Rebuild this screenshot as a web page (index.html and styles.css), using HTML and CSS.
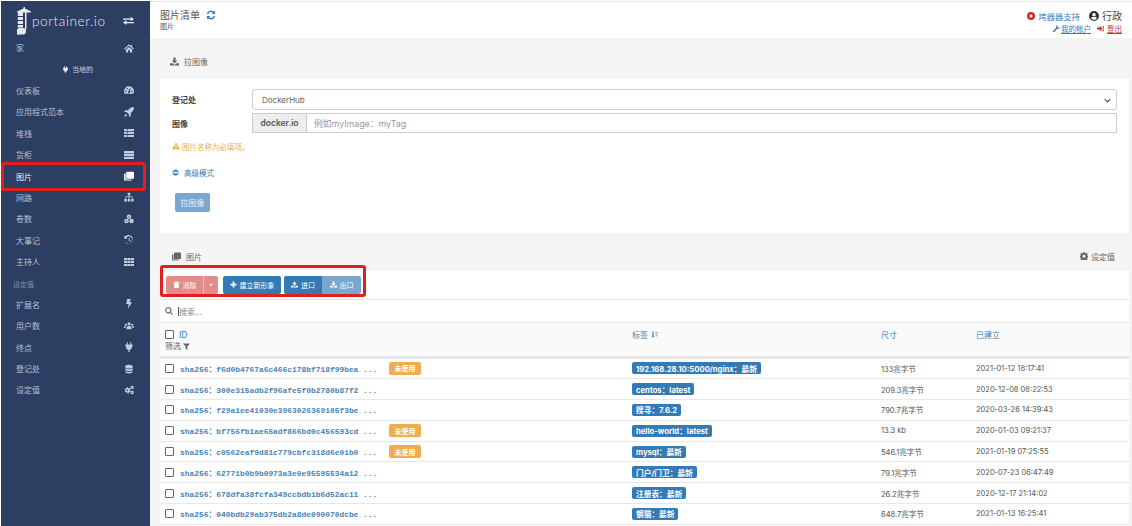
FILE: index.html
```html
<!DOCTYPE html>
<html lang="zh">
<head>
<meta charset="utf-8">
<title>图片清单</title>
<link rel="stylesheet" href="styles.css">
</head>
<body>
<svg class="defs" aria-hidden="true">
  <symbol id="i-home" viewBox="0 0 16 16"><path d="M8 2 0 9l1 1.2L8 4.3l7 5.9L16 9l-3-2.6V3h-2v1.700zM3 10.500V15h3.500v-3.500h3V15H13v-4.500L8 6.200z"/></symbol>
  <symbol id="i-gauge" viewBox="0 0 16 16"><path d="M8 2a8 8 0 0 0-8 8c0 1.600.4 3 1.200 4h13.600c.8-1 1.200-2.400 1.200-4a8 8 0 0 0-8-8zM3 11a1.200 1.200 0 1 1 0-2.400A1.200 1.200 0 0 1 3 11zm2-4a1.200 1.200 0 1 1 0-2.400A1.200 1.200 0 0 1 5 7zm4.500 5.500a1.700 1.700 0 0 1-3-1.300l3-6.200 1 .3-1 5.800c.3.400.2.900 0 1.400zM13 11a1.200 1.200 0 1 1 0-2.400 1.200 1.200 0 0 1 0 2.400z"/></symbol>
  <symbol id="i-rocket" viewBox="0 0 16 16"><path d="M16 0c-4 0-7 1.500-9.500 5H2L0 8h4l4 4v4l3-2v-4.500C14.500 7 16 4 16 0zM3 11c-1.500.5-2 2.500-2.500 4.500C2.500 15 4.500 14.500 5 13z"/></symbol>
  <symbol id="i-list" viewBox="0 0 16 16"><path d="M0 1.500h4.500V5H0zm5.500 0H16V5H5.500zM0 6.200h4.500v3.500H0zm5.500 0H16v3.500H5.500zM0 11h4.500v3.500H0zm5.500 0H16v3.500H5.500z"/></symbol>
  <symbol id="i-server" viewBox="0 0 16 16"><path d="M0 1.500h16v4H0zm0 5h16v3.500H0zM0 11h16v3.500H0z"/></symbol>
  <symbol id="i-clone" viewBox="0 0 16 16"><path d="M5 1h9.500A1.500 1.500 0 0 1 16 2.500V11a1.500 1.500 0 0 1-1.500 1.500H5A1.500 1.500 0 0 1 3.500 11V2.500A1.500 1.500 0 0 1 5 1z"/><path d="M2.500 4v8.500a1 1 0 0 0 1 1H12V15H1.500A1.500 1.500 0 0 1 0 13.500V5.500A1.500 1.500 0 0 1 1.500 4z"/></symbol>
  <symbol id="i-net" viewBox="0 0 16 16"><path d="M6 1h4v4H8.700v2.300H14V11h1.500v4h-4v-4H13V8.500H8.700V11H10v4H6v-4h1.300V8.500H3V11h1.500v4h-4v-4H2V7.300h5.300V5H6z"/></symbol>
  <symbol id="i-cubes" viewBox="0 0 16 16"><circle cx="8" cy="4.500" r="3.600"/><circle cx="4" cy="11" r="3.600"/><circle cx="12" cy="11" r="3.600"/><circle cx="8" cy="4.500" r="1.100" fill="#2d3e63"/><circle cx="4" cy="11" r="1.100" fill="#2d3e63"/></symbol>
  <symbol id="i-history" viewBox="0 0 16 16"><path d="M2 2 .5 1v5h5L3.800 4.300A5.500 5.500 0 1 1 3.500 11.500l-1.300 1A7.200 7.200 0 1 0 2 2z"/><path d="M7.500 4.500H9V8l2.500 1.800-.8 1.100L7.500 8.800z"/></symbol>
  <symbol id="i-grid" viewBox="0 0 16 16"><path d="M0 1.500h5V5H0zm5.500 0h5V5h-5zm5.500 0h5V5h-5zM0 6.200h5v3.500H0zm5.500 0h5v3.500h-5zm5.500 0h5v3.500h-5zM0 11h5v3.500H0zm5.500 0h5v3.500h-5zm5.500 0h5v3.500h-5z"/></symbol>
  <symbol id="i-bolt" viewBox="0 0 16 16"><path d="M5 0h6L9 5h4L6 16l1.500-8H3.500z"/></symbol>
  <symbol id="i-users" viewBox="0 0 16 16"><circle cx="8" cy="4.500" r="2.500"/><circle cx="3" cy="6" r="1.800"/><circle cx="13" cy="6" r="1.800"/><path d="M4 13v-2.500A3 3 0 0 1 7 8h2a3 3 0 0 1 3 2.500V13zM0 11V9.500A2 2 0 0 1 2 8h1a4 4 0 0 0-.5 3zm16 0V9.500A2 2 0 0 0 14 8h-1a4 4 0 0 1 .5 3z"/></symbol>
  <symbol id="i-plug" viewBox="0 0 16 16"><path d="M4.500 0H6v4h4V0h1.500v4H14v2h-1v2.500a5 5 0 0 1-4 4.400V16H7v-3.100a5 5 0 0 1-4-4.400V6H2V4h2.500z"/></symbol>
  <symbol id="i-db" viewBox="0 0 16 16"><path d="M2 3.500C2 2 5 1 8 1s6 1 6 2.500V5c0 1.300-3 2.200-6 2.200S2 6.300 2 5zm0 3.300C3.500 8 6 8.400 8 8.400s4.500-.4 6-1.600v2.400c0 1.300-3 2.200-6 2.200s-6-.9-6-2.200zm0 4.200c1.500 1.200 4 1.600 6 1.600s4.500-.4 6-1.600v1.500C14 14 11 15 8 15s-6-1-6-2.500z"/></symbol>
  <symbol id="i-cogs" viewBox="0 0 16 16"><path d="M4.500 3.500h2l.4 1.500 1.300.6 1.300-.7 1 1.500-1 1 .1 1.400 1.200.7-.7 1.700-1.400-.3-1 1-.2 1.500h-2L5 11.900l-1.300-.6-1.300.7-1.200-1.500 1-1.100-.1-1.300-1.100-.8.7-1.700 1.400.4 1-1z"/><circle cx="5.500" cy="8.500" r="1.300" fill="#2d3e63"/><circle cx="13" cy="4" r="2.800"/><circle cx="13" cy="12" r="2.800"/><circle cx="13" cy="4" r=".9" fill="#2d3e63"/><circle cx="13" cy="12" r=".9" fill="#2d3e63"/></symbol>
  <symbol id="i-exchange" viewBox="0 0 16 16"><path d="M0 5h11V2.500L16 6l-5 3.200V7H0zM16 10H5V7.800L0 11l5 3.500V12h11z"/></symbol>
  <symbol id="i-refresh" viewBox="0 0 16 16"><path d="M14.500 1v5.500H9l2.200-2.200A4.700 4.700 0 0 0 3.600 6.500H1.300A7 7 0 0 1 12.800 2.700zM1.500 15V9.500H7l-2.200 2.200a4.700 4.700 0 0 0 7.600-2.200h2.300A7 7 0 0 1 3.200 13.300z"/></symbol>
  <symbol id="i-download" viewBox="0 0 16 16"><path d="M6 1h4v5.500h3L8 11.500 3 6.500h3zM0 11h4.500L8 14l3.500-3H16v4H0z"/></symbol>
  <symbol id="i-upload" viewBox="0 0 16 16"><path d="M8 1l5 5h-3v5H6V6H3zM0 11h4.500v1.500h7V11H16v4H0z"/></symbol>
  <symbol id="i-warn" viewBox="0 0 16 16"><path d="M8 1 .2 15h15.600zM7 6h2v5H7zm0 6h2v2H7z" fill-rule="evenodd"/></symbol>
  <symbol id="i-globe" viewBox="0 0 16 16"><path d="M8 1a7 7 0 1 0 0 14A7 7 0 0 0 8 1zM1.800 7h12.400v1.300H1.800zm1 3.500h10.400v1.200H2.800zm0-6.500h10.400v1.200H2.800z" fill-rule="evenodd"/></symbol>
  <symbol id="i-trash" viewBox="0 0 16 16"><path d="M5.500 1h5l.8 1.500H15V4H1V2.500h3.700zM2.500 5h11v9.500A1.500 1.500 0 0 1 12 16H4a1.500 1.500 0 0 1-1.500-1.500z"/></symbol>
  <symbol id="i-plus" viewBox="0 0 16 16"><path d="M6 1h4v5h5v4h-5v5H6v-5H1V6h5z"/></symbol>
  <symbol id="i-search" viewBox="0 0 16 16"><path d="M6.500 0a6.500 6.500 0 0 1 5.200 10.400L16 14.700 14.300 16.400l-4.200-4.300A6.500 6.500 0 1 1 6.500 0zm0 2.300a4.200 4.200 0 1 0 0 8.400 4.200 4.200 0 0 0 0-8.400z"/></symbol>
  <symbol id="i-filter" viewBox="0 0 16 16"><path d="M0 1h16L10 8v8l-4-3V8z"/></symbol>
  <symbol id="i-sort" viewBox="0 0 16 16"><path d="M3 1h3v10h2.500l-4 4.500-4-4.500H3zM10 2h5v2h-5zm0 4h5v2h-5zm1 4h4v2h-4z"/></symbol>
  <symbol id="i-cog" viewBox="0 0 16 16"><path d="M6.500 0h3l.4 2.200 1.500.7L13.300 1.600l2.100 2.100-1.300 1.900.7 1.500 2.200.4v3l-2.200.4-.7 1.500 1.300 1.900-2.100 2.100-1.900-1.300-1.500.7-.4 2.200h-3l-.4-2.200-1.500-.7-1.900 1.300L.6 14.300l1.300-1.900-.7-1.500L-1 10.500v-3l2.200-.4.700-1.500L.6 3.700l2.100-2.100 1.900 1.300 1.500-.7zM8 5.500a3 3 0 1 0 0 6 3 3 0 0 0 0-6z" fill-rule="evenodd"/></symbol>
  <symbol id="i-life" viewBox="0 0 16 16"><path d="M8 0a8 8 0 1 0 0 16A8 8 0 0 0 8 0zm0 5a3 3 0 1 1 0 6 3 3 0 0 1 0-6z" fill-rule="evenodd"/></symbol>
  <symbol id="i-user" viewBox="0 0 16 16"><path d="M8 0a8 8 0 1 0 0 16A8 8 0 0 0 8 0zm0 3a2.800 2.800 0 1 1 0 5.600A2.800 2.800 0 0 1 8 3zm0 11a6 6 0 0 1-4.500-2c.3-1.500 1.500-2.400 2.500-2.400h4c1 0 2.200.9 2.500 2.400A6 6 0 0 1 8 14z" fill-rule="evenodd"/></symbol>
  <symbol id="i-wrench" viewBox="0 0 16 16"><path d="M15.800 4a4.500 4.500 0 0 1-6 4.800L3.500 15.500a1.700 1.700 0 0 1-2.800-2.500L7.200 6.200A4.500 4.500 0 0 1 12 .2L9.500 2.800l.5 3 3 .6z"/></symbol>
  <symbol id="i-signout" viewBox="0 0 16 16"><path d="M0 5.500h6V2l7 6-7 6v-3.500H0zM10 2h6v12h-6v-1.500h4.500v-9H10z"/></symbol>
  <symbol id="i-logo" viewBox="0 0 14 28"><path d="M0 4.500 6.500 1.500V0H8v1.500L14 4.500V5.500H9.500V22H8V5.500H6V9H.8V5.500H0zM.8 10H6v3H.8zm0 4H6v3H.8zm0 4H6v2.500H.8zM0 22.500A2.500 2.500 0 0 1 2.500 21H6a3 3 0 0 1 3 3.200A3.300 3.300 0 0 1 5.800 27.500H2.500A2.800 2.800 0 0 1 0 22.500z"/></symbol>
</svg>

<div class="app">
  <aside class="sidebar">
    <div class="brand">
      <svg class="logo"><use href="#i-logo"/></svg>
      <span class="brand-name">portainer.io</span>
      <svg class="brand-toggle"><use href="#i-exchange"/></svg>
    </div>
    <nav class="nav">
      <a class="nav-item">家<svg class="ic"><use href="#i-home"/></svg></a>
      <div class="nav-env"><svg class="ic-s"><use href="#i-plug"/></svg>当地的</div>
      <a class="nav-item">仪表板<svg class="ic"><use href="#i-gauge"/></svg></a>
      <a class="nav-item">应用程式范本<svg class="ic"><use href="#i-rocket"/></svg></a>
      <a class="nav-item">堆栈<svg class="ic"><use href="#i-list"/></svg></a>
      <a class="nav-item">货柜<svg class="ic"><use href="#i-server"/></svg></a>
      <a class="nav-item nav-active">图片<svg class="ic"><use href="#i-clone"/></svg></a>
      <a class="nav-item">网路<svg class="ic"><use href="#i-net"/></svg></a>
      <a class="nav-item">卷数<svg class="ic"><use href="#i-cubes"/></svg></a>
      <a class="nav-item">大事记<svg class="ic"><use href="#i-history"/></svg></a>
      <a class="nav-item">主持人<svg class="ic"><use href="#i-grid"/></svg></a>
      <div class="nav-title">设定值</div>
      <a class="nav-item">扩展名<svg class="ic"><use href="#i-bolt"/></svg></a>
      <a class="nav-item">用户数<svg class="ic"><use href="#i-users"/></svg></a>
      <a class="nav-item">终点<svg class="ic"><use href="#i-plug"/></svg></a>
      <a class="nav-item">登记处<svg class="ic"><use href="#i-db"/></svg></a>
      <a class="nav-item">设定值<svg class="ic"><use href="#i-cogs"/></svg></a>
    </nav>
    <div class="mark mark-nav"></div>
  </aside>

  <main class="main">
    <header class="topbar">
      <div class="crumbs">
        <div class="page-title">图片清单<svg class="refresh"><use href="#i-refresh"/></svg></div>
        <div class="page-sub">图片</div>
      </div>
      <div class="user">
        <div class="user-top">
          <svg class="life"><use href="#i-life"/></svg><a class="support">垮器器支持</a>
          <svg class="user-ic"><use href="#i-user"/></svg><span class="user-name">行政</span>
        </div>
        <div class="user-links">
          <svg class="mini blue"><use href="#i-wrench"/></svg><a class="link-account">我的帐户</a>
          <svg class="mini red"><use href="#i-signout"/></svg><a class="link-logout">登出</a>
        </div>
      </div>
    </header>

    <div class="content">
      <section class="panel panel-pull">
        <div class="panel-head panel-head-pull"><svg class="head-ic"><use href="#i-download"/></svg>拉图像</div>
        <div class="pull-body">
          <div class="form-row">
            <label class="form-label">登记处</label>
            <div class="select">DockerHub<svg class="chev" viewBox="0 0 10 6"><path d="M1 1l4 4 4-4" fill="none" stroke="#444" stroke-width="1.500"/></svg></div>
          </div>
          <div class="form-row form-row-image">
            <label class="form-label">图像</label>
            <div class="input-group">
              <span class="addon">docker.io</span>
              <span class="input">例如myImage：myTag</span>
            </div>
          </div>
          <div class="warn"><svg class="warn-ic"><use href="#i-warn"/></svg>图片名称为必填项。</div>
          <div class="advanced"><svg class="adv-ic"><use href="#i-globe"/></svg>高级模式</div>
          <button class="btn-pull">拉图像</button>
        </div>
      </section>

      <section class="panel panel-images">
        <div class="panel-head panel-head-images">
          <span class="head-left"><svg class="head-ic"><use href="#i-clone"/></svg>图片</span>
          <span class="head-right"><svg class="cog"><use href="#i-cog"/></svg>设定值</span>
        </div>
        <div class="toolbar">
          <span class="btn btn-red btn-del"><svg class="b-ic"><use href="#i-trash"/></svg>消除</span><span class="btn btn-red btn-caret"><i class="caret"></i></span>
          <span class="btn btn-blue btn-new"><svg class="b-ic"><use href="#i-plus"/></svg>建立新形象</span>
          <span class="btn-pair"><span class="btn btn-blue btn-imp"><svg class="b-ic"><use href="#i-upload"/></svg>进口</span><span class="btn btn-light btn-exp"><svg class="b-ic"><use href="#i-download"/></svg>出口</span></span>
        </div>
        <div class="searchbar"><svg class="search-ic"><use href="#i-search"/></svg><span class="caret-line"></span>搜索...</div>
        <div class="table">
          <div class="thead">
            <div class="th th-id">
              <div class="th-line"><span class="check"></span><span class="th-link">ID</span></div>
              <div class="th-filter">筛选<svg class="filter"><use href="#i-filter"/></svg></div>
            </div>
            <div class="th"><span class="th-link th-muted">标签<svg class="sort"><use href="#i-sort"/></svg></span></div>
            <div class="th"><span class="th-link">尺寸</span></div>
            <div class="th"><span class="th-link">已建立</span></div>
          </div>

          <div class="tr"><div class="td td-id"><span class="check"></span><a class="hash">sha256：f6d0b4767a6c466c178bf718f99bea ...</a><span class="unused">未使用</span></div><div class="td"><span class="tag">192.168.28.10:5000/nginx：最新</span></div><div class="td">133兆字节</div><div class="td">2021-01-12 18:17:41</div></div>
          <div class="tr"><div class="td td-id"><span class="check"></span><a class="hash">sha256：300e315adb2f96afe5f0b2780b87f2 ...</a></div><div class="td"><span class="tag">centos：latest</span></div><div class="td">209.3兆字节</div><div class="td">2020-12-08 08:22:53</div></div>
          <div class="tr"><div class="td td-id"><span class="check"></span><a class="hash">sha256：f29a1ee41030e3963026369105f3be ...</a></div><div class="td"><span class="tag">搜寻：7.6.2</span></div><div class="td">790.7兆字节</div><div class="td">2020-03-26 14:39:43</div></div>
          <div class="tr"><div class="td td-id"><span class="check"></span><a class="hash">sha256：bf756fb1ae65adf866bd0c456593cd ...</a><span class="unused">未使用</span></div><div class="td"><span class="tag">hello-world：latest</span></div><div class="td">13.3 kb</div><div class="td">2020-01-03 09:21:37</div></div>
          <div class="tr"><div class="td td-id"><span class="check"></span><a class="hash">sha256：c0562eaf9d81c779cbfc318d6e01b0 ...</a><span class="unused">未使用</span></div><div class="td"><span class="tag">mysql：最新</span></div><div class="td">546.1兆字节</div><div class="td">2021-01-19 07:25:55</div></div>
          <div class="tr"><div class="td td-id"><span class="check"></span><a class="hash">sha256：62771b0b9b0973a3e0e95595534a12 ...</a></div><div class="td"><span class="tag">门户/门卫：最新</span></div><div class="td">79.1兆字节</div><div class="td">2020-07-23 06:47:49</div></div>
          <div class="tr"><div class="td td-id"><span class="check"></span><a class="hash">sha256：678dfa38fcfa349ccbdb1b6d52ac11 ...</a></div><div class="td"><span class="tag">注册表：最新</span></div><div class="td">26.2兆字节</div><div class="td">2020-12-17 21:14:02</div></div>
          <div class="tr"><div class="td td-id"><span class="check"></span><a class="hash">sha256：040bdb29ab375db2a8de090070dcbe ...</a></div><div class="td"><span class="tag">钢猫：最新</span></div><div class="td">648.7兆字节</div><div class="td">2021-01-13 16:25:41</div></div>
        </div>
      </section>
    </div>
    <div class="mark mark-toolbar"></div>
  </main>
</div>
</body>
</html>
```

FILE: styles.css
```css
* { box-sizing: border-box; }
html, body { margin: 0; padding: 0; height: 100%; overflow: hidden; background: #fff; }
body { font-family: "Inter", "Noto Sans CJK SC", sans-serif; font-size: 8px; color: #555; }
.defs { position: absolute; width: 0; height: 0; }
svg { fill: currentColor; flex: none; }

.app { display: flex; height: 526px; padding: 1px 0 0 1px; }

/* sidebar */
.sidebar { position: relative; width: 149px; flex: none; background: #2d3e63; color: #b6c0d6; }
.brand { display: flex; align-items: center; height: 36px; padding: 3px 0 0 16px; color: #e4e8f0; }
.logo { width: 14px; height: 28px; margin-right: 1px; }
.brand-name { font-size: 13.500px; font-family: "Lato", sans-serif; font-weight: 300; letter-spacing: .6px; width: 91px; color: #e4e8f0; }
.brand-toggle { width: 11px; height: 11px; color: #e8ebf2; }
.nav { display: flex; flex-direction: column; }
.nav-item { display: flex; align-items: center; justify-content: space-between; height: 21.400px; padding: 0 16px 0 15px; font-size: 8px; }
.nav-active { color: #eef1f7; }
.nav-active .ic { color: #fff; }
.ic { width: 10px; height: 10px; color: #c3cbdd; }
.nav-env { display: flex; align-items: center; justify-content: center; gap: 3px; height: 21.400px; font-size: 7px; color: #ccd3e2; padding-left: 4px; }
.ic-s { width: 7px; height: 7px; color: #e6e9f0; }
.nav-title { display: flex; align-items: center; height: 21.400px; padding: 2px 0 0 12px; font-size: 7px; color: #7f90b5; }

/* annotations */
.mark { position: absolute; border: 3px solid #e0201c; border-radius: 3px; pointer-events: none; }
.mark-nav { left: 0; top: 161px; width: 145px; height: 29px; }
.mark-toolbar { left: 10px; top: 264px; width: 206px; height: 32px; }

/* main */
.main { position: relative; flex: 1; min-width: 0; display: flex; flex-direction: column; }
.topbar { display: flex; justify-content: space-between; height: 37px; padding: 6px 10px 0 10px; background: #fff; border-top: 1px solid #e6e6e6; }
.page-title { display: flex; align-items: center; gap: 6px; font-size: 10px; line-height: 14px; color: #555; }
.refresh { width: 10px; height: 10px; color: #337ab7; }
.page-sub { font-size: 7px; line-height: 9px; color: #555; }
.user { display: flex; flex-direction: column; align-items: flex-end; }
.user-top { display: flex; align-items: center; height: 15px; }
.life { width: 8px; height: 8px; color: #c9302c; margin-right: 3px; }
.support { font-size: 8.400px; color: #337ab7; margin-right: 9px; }
.user-ic { width: 10px; height: 10px; color: #333; margin-right: 3px; }
.user-name { font-size: 10px; color: #444; }
.user-links { display: flex; align-items: center; height: 11px; font-size: 7.500px; }
.mini { width: 7px; height: 7px; margin-right: 1px; }
.blue { color: #337ab7; }
.red { color: #c9302c; margin-left: 6px; margin-right: 3px; }
.link-account { color: #337ab7; text-decoration: underline; }
.link-logout { color: #c9302c; text-decoration: underline; }

.content { flex: 1; min-height: 0; display: flex; flex-direction: column; gap: 10px; padding: 8px 3px 0 10px; background: #f4f4f4; overflow: hidden; }
.panel { background: #fff; flex: none; }
.panel-pull { height: 187px; }
.panel-head { display: flex; align-items: center; background: #f5f5f5; border-bottom: 1px solid #efefef; color: #666; font-size: 8px; }
.panel-head-pull { height: 32px; padding-left: 10px; }
.panel-head-images { height: 27px; padding: 0 14px 0 12px; justify-content: space-between; }
.head-ic { width: 9px; height: 9px; margin-right: 5px; color: #666; }
.head-left, .head-right { display: flex; align-items: center; }
.cog { width: 8px; height: 8px; margin-right: 3px; color: #666; }

.pull-body { padding: 11px 12px 0 12px; }
.form-row { display: flex; align-items: center; height: 21px; }
.form-row-image { height: 20px; margin-top: 3px; }
.form-label { width: 80px; font-size: 8px; font-weight: 700; color: #444; }
.select { position: relative; flex: 1; height: 21px; display: flex; align-items: center; padding-left: 9px; font-size: 8px; color: #666; border: 1px solid #ccc; border-radius: 3px; }
.chev { position: absolute; right: 5px; top: 8px; width: 7px; height: 5px; fill: none; }
.input-group { flex: 1; display: flex; height: 20px; border: 1px solid #ccc; }
.addon { display: flex; align-items: center; justify-content: center; width: 54px; background: #eee; border-right: 1px solid #ccc; font-size: 8.500px; font-weight: 600; color: #555; }
.input { display: flex; align-items: center; padding-left: 7px; font-size: 8.800px; color: #999; }
.warn { display: flex; align-items: center; margin-top: 7px; font-size: 7.500px; color: #f0ad4e; height: 12px; }
.warn-ic { width: 8px; height: 8px; margin-right: 2px; color: #f0ad4e; }
.advanced { display: flex; align-items: center; margin-top: 14px; font-size: 7.500px; color: #337ab7; height: 12px; }
.adv-ic { width: 7px; height: 7px; margin-right: 5px; color: #337ab7; }
.btn-pull { display: block; margin: 15px 0 0 3px; width: 35px; height: 19px; padding: 0; border: 0; border-radius: 2px; background: #7aa7cf; color: #e8f0f7; font: 8px "Inter", "Noto Sans CJK SC", sans-serif; }

.panel-images { height: 283px; }
.toolbar { display: flex; align-items: center; height: 30px; padding: 0 6px; background: #fff; border-bottom: 1px solid #e6e6e6; }
.btn { display: inline-flex; align-items: center; justify-content: center; height: 18px; font-size: 7px; color: #fff; }
.b-ic { width: 7px; height: 7px; margin-right: 3px; }
.btn-red { background: #e38d8a; }
.btn-del { width: 37px; border-radius: 2px 0 0 2px; }
.btn-caret { width: 15px; border-left: 1px solid #f0b8b6; border-radius: 0 2px 2px 0; margin-right: 5px; }
.caret { border-top: 2.500px solid #fff; border-left: 2.500px solid transparent; border-right: 2.500px solid transparent; }
.btn-blue { background: #337ab7; }
.btn-new { width: 58px; border-radius: 2px; margin-right: 3px; }
.btn-pair { display: inline-flex; }
.btn-imp { width: 38px; border-radius: 2px 0 0 2px; }
.btn-light { background: #7aa7cf; }
.btn-exp { width: 39px; border-radius: 0 2px 2px 0; }
.searchbar { display: flex; align-items: center; height: 23px; padding-left: 5px; background: #fff; border-bottom: 1px solid #e8e8e8; font-size: 8px; color: #888; }
.search-ic { width: 8px; height: 8px; margin-right: 5px; color: #666; }
.caret-line { width: 1px; height: 9px; background: #555; }

.thead, .tr { display: grid; grid-template-columns: 472px 249px 95px 1fr; }
.thead { height: 35.500px; background: #fafafa; border-bottom: 3px solid #e8e8e8; }
.th { padding: 6px 0 0 0; font-size: 8px; }
.th-id { padding: 6px 0 0 5px; }
.th-line { display: flex; align-items: center; height: 11px; }
.th-link { color: #337ab7; display: inline-flex; align-items: center; }
.th-muted { color: #5e7f9e; }
.th-line .th-link { margin-left: 5px; font-size: 8.500px; }
.th-filter { display: flex; align-items: center; gap: 2px; margin-top: 1px; color: #666; font-size: 8px; line-height: 10px; }
.filter { width: 7px; height: 7px; }
.sort { width: 7px; height: 7px; margin-left: 3px; }
.check { width: 9px; height: 9px; border: 1px solid #666; background: #fff; flex: none; display: inline-block; border-radius: 1px; }

.tr { height: 20.800px; border-bottom: 1px solid #e8e8e8; background: #fff; }
.td { display: flex; align-items: center; font-size: 7.500px; color: #555; }
.td-id { padding-left: 5px; }
.hash { margin-left: 6px; width: 209px; white-space: nowrap; font-family: "Liberation Mono", "Noto Sans CJK SC", monospace; font-size: 7.900px; font-weight: 700; color: #4a7fb3; }
.unused { display: inline-flex; align-items: center; justify-content: center; width: 32px; height: 13px; border-radius: 2px; background: #f0ad4e; color: #fff; font-size: 7px; font-weight: 600; }
.tag { display: inline-flex; align-items: center; height: 12px; padding: 0 4px; border-radius: 2px; background: #337ab7; color: #fff; font-size: 7.700px; font-weight: 700; white-space: nowrap; }
```
